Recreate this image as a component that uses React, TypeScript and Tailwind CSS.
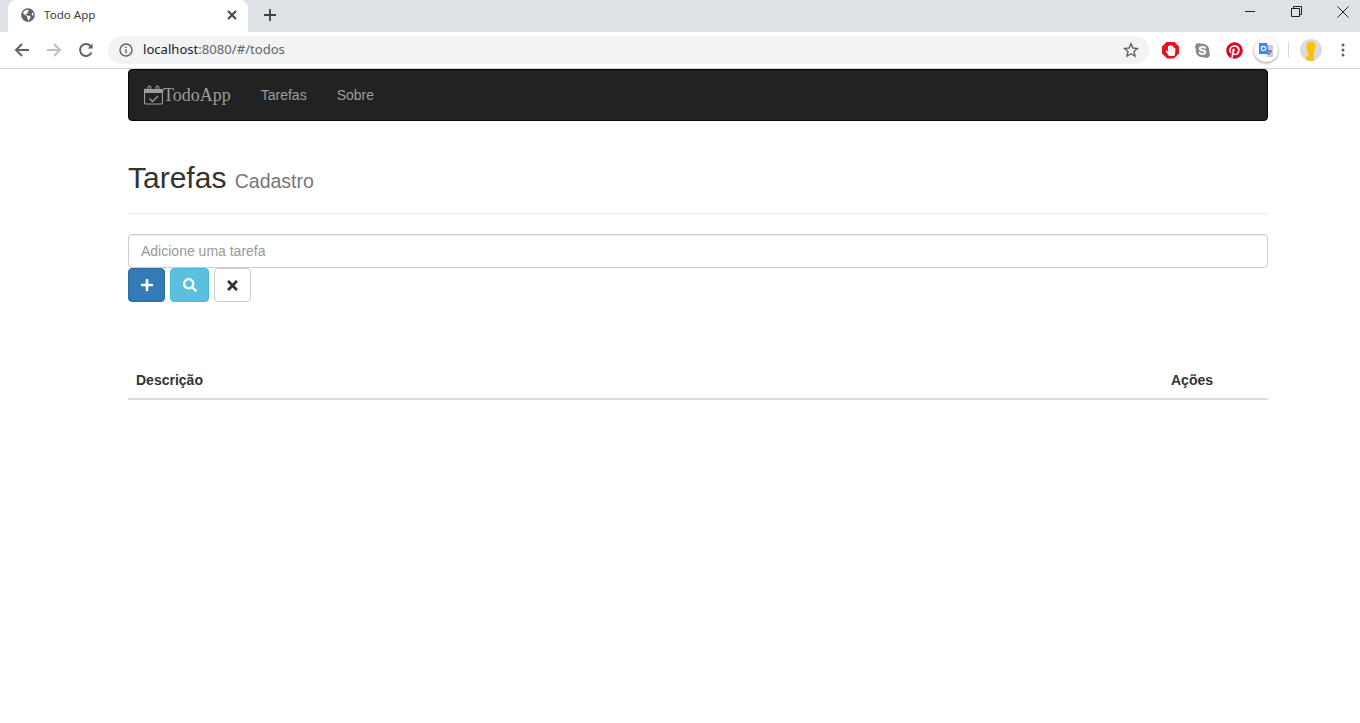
import { FaPlus, FaSearch, FaTimes, FaGlobeAmericas, FaSkype, FaPinterest, FaHandPaper } from "react-icons/fa";

const sans = "font-['Liberation_Sans',Arial,sans-serif]";
const ui = "font-['Noto_Sans','Open_Sans',sans-serif]";

function Toolbar() {
  return (
    <div className="h-[37px] bg-white border-b border-[#d0d2d5] flex items-center">
      <svg className="ml-[14px] w-4 h-4" viewBox="0 0 16 16" fill="none" stroke="#5f6368" strokeWidth="2"><path d="M15 8H2M8 2 2 8l6 6" /></svg>
      <svg className="ml-[16px] w-4 h-4" viewBox="0 0 16 16" fill="none" stroke="#bdc1c6" strokeWidth="2"><path d="M1 8h13M8 2l6 6-6 6" /></svg>
      <svg className="ml-[16px] w-4 h-4" viewBox="0 0 16 16" fill="none" stroke="#5f6368" strokeWidth="2"><path d="M13.5 10.5A6 6 0 1 1 12.4 3.8L14 5.5" /><path d="M14.6 1.5v5h-5" fill="#5f6368" stroke="none" /></svg>
      <div className="ml-[14px] h-[28px] w-[1041px] rounded-full bg-[#f1f3f4] flex items-center">
        <svg className="ml-[11px] w-[14px] h-[14px]" viewBox="0 0 14 14" fill="none" stroke="#5f6368" strokeWidth="1.4"><circle cx="7" cy="7" r="6" /><path d="M7 6.2v4M7 3.4v1.5" /></svg>
        <span className={`ml-[10px] text-[13.1px] text-[#202124] ${ui}`}>localhost<span className="text-[#5f6368]">:8080/#/todos</span></span>
        <svg className="ml-auto mr-[10px] w-4 h-4" viewBox="0 0 16 16" fill="none" stroke="#5f6368" strokeWidth="1.4"><path d="m8 1.8 1.9 4.2 4.5.5-3.4 3 1 4.5L8 11.7 4 14l1-4.5-3.4-3 4.5-.5z" /></svg>
      </div>
      <div className="ml-[13px] w-[17px] h-[17px] bg-[#e8101a] [clip-path:polygon(30%_0,70%_0,100%_30%,100%_70%,70%_100%,30%_100%,0_70%,0_30%)] flex items-center justify-center">
        <FaHandPaper className="w-[11px] h-[11px] text-white" />
      </div>
      <FaSkype className="ml-[15px] w-[17px] h-[17px] text-[#8a8a8a]" />
      <FaPinterest className="ml-[15px] w-[17px] h-[17px] text-[#e60023]" />
      <div className="ml-[11px] w-6 h-6 rounded-full bg-white shadow-[0_1px_3px_rgba(0,0,0,0.4)] flex items-center justify-center">
        <svg className="w-4 h-4" viewBox="0 0 16 16"><path d="M7 3h8v12H9z" fill="#c9ced6" /><path d="M1 1h8l2 11H1z" fill="#4285f4" /><circle cx="5.5" cy="6.5" r="2.2" fill="none" stroke="#fff" strokeWidth="1.2" /><path d="M10 9h4M12 8v1M10.5 13l3-4" stroke="#5f6368" strokeWidth="1" fill="none" /></svg>
      </div>
      <div className="ml-[10px] w-px h-4 bg-[#d6d8db]" />
      <div className="ml-[11px] w-[22px] h-[22px] rounded-full bg-[#dcdcdc] flex justify-center overflow-hidden">
        <svg className="w-[22px] h-[22px]" viewBox="0 0 22 22"><path d="M6.5 7a4.5 4.5 0 0 1 9 0c0 3-1.5 5-1.5 8v7H6v-4l3-2c-1.5-2-2.5-5-2.5-9z" fill="#f7c600" /></svg>
      </div>
      <svg className="ml-[19px] w-[4px] h-4" viewBox="0 0 4 16" fill="#5f6368"><circle cx="2" cy="3" r="1.5" /><circle cx="2" cy="8" r="1.5" /><circle cx="2" cy="13" r="1.5" /></svg>
    </div>
  );
}

function TabStrip() {
  return (
    <div className="h-[32px] bg-[#dee1e6] flex">
      <div className="ml-[8px] w-[240px] h-[32px] pb-[2px] bg-white rounded-t-[8px] flex items-center">
        <FaGlobeAmericas className="ml-[13px] w-[14px] h-[14px] text-[#5f6368]" />
        <span className={`ml-[9px] text-[11.6px] text-[#3c4043] ${ui}`}>Todo App</span>
        <svg className="ml-auto mr-[11px] w-[10px] h-[10px]" viewBox="0 0 10 10" stroke="#3c4043" strokeWidth="1.8"><path d="m1 1 8 8M9 1 1 9" /></svg>
      </div>
      <svg className="ml-[16px] mt-[9px] w-3 h-3" viewBox="0 0 12 12" stroke="#3c4043" strokeWidth="1.8"><path d="M6 0v12M0 6h12" /></svg>
      <div className="ml-auto flex">
        <svg className="mt-[6px] w-[10px] h-[11px] mr-[36px]" viewBox="0 0 10 11" stroke="#202124" strokeWidth="1"><path d="M0 5.5h10" /></svg>
        <svg className="mt-[6px] w-[11px] h-[11px] mr-[35px]" viewBox="0 0 11 11" fill="none" stroke="#202124" strokeWidth="1"><path d="M.5 2.5h8v8h-8zM2.5 2.5v-2h8v8h-2" /></svg>
        <svg className="mt-[6px] w-[12px] h-[12px] mr-[11px]" viewBox="0 0 12 12" stroke="#202124" strokeWidth="1"><path d="m.5.5 11 11M11.5.5l-11 11" /></svg>
      </div>
    </div>
  );
}

export default function App() {
  return (
    <div className={`min-h-[723px] bg-white ${sans} text-[14px] text-[#333]`}>
      <TabStrip />
      <Toolbar />
      <div className="ml-[128px] w-[1140px]">
        <nav className="h-[52px] bg-[#222] border border-[#080808] rounded-[4px] flex items-center">
          <svg className="ml-[15px] w-[19px] h-[20px]" viewBox="0 0 19 20" fill="none" stroke="#9d9d9d">
            <path d="M1.5 5h16a1 1 0 0 1 1 0v13a1.5 1.5 0 0 1-1.5 1H2a1.5 1.5 0 0 1-1.5-1V5.5A1 1 0 0 1 1.5 4z" strokeWidth="1.2" />
            <path d="M1 4h17v4H1z" fill="#9d9d9d" stroke="none" />
            <path d="M4 6V2.5a1.4 1.4 0 0 1 2.8 0V6M12 6V2.5a1.4 1.4 0 0 1 2.8 0V6" strokeWidth="1.1" />
            <path d="m5.5 13.5 3 3 5.5-5.5" strokeWidth="1.3" />
          </svg>
          <span className="text-[18px] text-[#9d9d9d] font-['Liberation_Serif',serif]">TodoApp</span>
          <span className="ml-[30px] text-[#9d9d9d]">Tarefas</span>
          <span className="ml-[30px] text-[#9d9d9d]">Sobre</span>
        </nav>
        <header className="mt-[40px] h-[53px] border-b border-[#eee]">
          <h1 className="text-[30px] leading-[33px] font-normal">
            Tarefas <small className="text-[19.5px] text-[#777]">Cadastro</small>
          </h1>
        </header>
        <input
          placeholder="Adicione uma tarefa"
          className="mt-[20px] block w-full h-[34px] px-3 border border-[#ccc] rounded-[4px] text-[14px] placeholder:text-[#999] shadow-[inset_0_1px_1px_rgba(0,0,0,0.075)]"
        />
        <div className="flex gap-[5px]">
          <button className="w-[37px] h-[34px] bg-[#337ab7] border border-[#2e6da4] rounded-[4px] flex items-center justify-center text-white"><FaPlus className="w-[14px] h-[14px]" /></button>
          <button className="w-[39px] h-[34px] bg-[#5bc0de] border border-[#46b8da] rounded-[4px] flex items-center justify-center text-white"><FaSearch className="w-[14px] h-[14px]" /></button>
          <button className="w-[37px] h-[34px] bg-white border border-[#ccc] rounded-[4px] flex items-center justify-center text-[#333]"><FaTimes className="w-[15px] h-[15px]" /></button>
        </div>
        <div className="mt-[60px] h-[38px] border-b-2 border-[#ddd] flex items-center font-bold">
          <span className="ml-2">Descrição</span>
          <span className="ml-auto w-[97px]">Ações</span>
        </div>
      </div>
    </div>
  );
}
